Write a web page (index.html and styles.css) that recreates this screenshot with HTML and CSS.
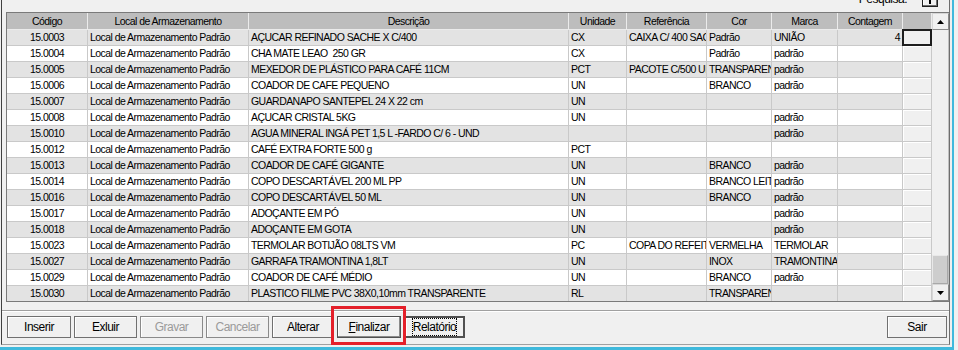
FILE: index.html
```html
<!DOCTYPE html>
<html lang="pt-BR">
<head>
<meta charset="utf-8">
<title>Contagem de estoque</title>
<link rel="stylesheet" href="styles.css">
</head>
<body>
<div class="frame">
  <div class="panel">
    <div class="topbar">
      <span class="search-label">Pesquisa:</span>
      <span class="plus-btn"><svg width="10" height="10" viewBox="0 0 10 10"><rect x="4" y="0" width="2" height="10" fill="#000"/><rect x="0" y="4" width="10" height="2" fill="#000"/></svg></span>
    </div>
    <div class="grid">
      <div class="table">
        <div class="row head">
          <div class="c">Código</div><div class="c">Local de Armazenamento</div><div class="c">Descrição</div><div class="c">Unidade</div><div class="c">Referência</div><div class="c">Cor</div><div class="c">Marca</div><div class="c">Contagem</div><div class="c"></div>
        </div>
        <div class="row odd"><div class="c cod">15.0003</div><div class="c">Local de Armazenamento Padrão</div><div class="c">AÇUCAR REFINADO SACHE X C/400</div><div class="c">CX</div><div class="c">CAIXA C/ 400 SAC</div><div class="c">Padrão</div><div class="c">UNIÃO</div><div class="c num">4</div><div class="c b focus"></div></div>
        <div class="row even"><div class="c cod">15.0004</div><div class="c">Local de Armazenamento Padrão</div><div class="c">CHA MATE LEAO&nbsp; 250 GR</div><div class="c">CX</div><div class="c"></div><div class="c">Padrão</div><div class="c">padrão</div><div class="c num"></div><div class="c b"></div></div>
        <div class="row odd"><div class="c cod">15.0005</div><div class="c">Local de Armazenamento Padrão</div><div class="c">MEXEDOR DE PLÁSTICO PARA CAFÉ 11CM</div><div class="c">PCT</div><div class="c">PACOTE C/500 UN</div><div class="c">TRANSPAREN</div><div class="c">padrão</div><div class="c num"></div><div class="c b"></div></div>
        <div class="row even"><div class="c cod">15.0006</div><div class="c">Local de Armazenamento Padrão</div><div class="c">COADOR DE CAFE PEQUENO</div><div class="c">UN</div><div class="c"></div><div class="c">BRANCO</div><div class="c">padrão</div><div class="c num"></div><div class="c b"></div></div>
        <div class="row odd"><div class="c cod">15.0007</div><div class="c">Local de Armazenamento Padrão</div><div class="c">GUARDANAPO SANTEPEL 24 X 22 cm</div><div class="c">UN</div><div class="c"></div><div class="c"></div><div class="c"></div><div class="c num"></div><div class="c b"></div></div>
        <div class="row even"><div class="c cod">15.0008</div><div class="c">Local de Armazenamento Padrão</div><div class="c">AÇUCAR CRISTAL 5KG</div><div class="c">UN</div><div class="c"></div><div class="c"></div><div class="c">padrão</div><div class="c num"></div><div class="c b"></div></div>
        <div class="row odd"><div class="c cod">15.0010</div><div class="c">Local de Armazenamento Padrão</div><div class="c">AGUA MINERAL INGÁ PET 1,5 L -FARDO C/ 6 - UND</div><div class="c"></div><div class="c"></div><div class="c"></div><div class="c">padrão</div><div class="c num"></div><div class="c b"></div></div>
        <div class="row even"><div class="c cod">15.0012</div><div class="c">Local de Armazenamento Padrão</div><div class="c">CAFÉ EXTRA FORTE 500 g</div><div class="c">PCT</div><div class="c"></div><div class="c"></div><div class="c"></div><div class="c num"></div><div class="c b"></div></div>
        <div class="row odd"><div class="c cod">15.0013</div><div class="c">Local de Armazenamento Padrão</div><div class="c">COADOR DE CAFÉ GIGANTE</div><div class="c">UN</div><div class="c"></div><div class="c">BRANCO</div><div class="c">padrão</div><div class="c num"></div><div class="c b"></div></div>
        <div class="row even"><div class="c cod">15.0014</div><div class="c">Local de Armazenamento Padrão</div><div class="c">COPO DESCARTÁVEL 200 ML PP</div><div class="c">UN</div><div class="c"></div><div class="c">BRANCO LEIT</div><div class="c">padrão</div><div class="c num"></div><div class="c b"></div></div>
        <div class="row odd"><div class="c cod">15.0016</div><div class="c">Local de Armazenamento Padrão</div><div class="c">COPO DESCARTÁVEL 50 ML</div><div class="c">UN</div><div class="c"></div><div class="c">BRANCO</div><div class="c">padrão</div><div class="c num"></div><div class="c b"></div></div>
        <div class="row even"><div class="c cod">15.0017</div><div class="c">Local de Armazenamento Padrão</div><div class="c">ADOÇANTE EM PÓ</div><div class="c">UN</div><div class="c"></div><div class="c"></div><div class="c">padrão</div><div class="c num"></div><div class="c b"></div></div>
        <div class="row odd"><div class="c cod">15.0018</div><div class="c">Local de Armazenamento Padrão</div><div class="c">ADOÇANTE EM GOTA</div><div class="c">UN</div><div class="c"></div><div class="c"></div><div class="c">padrão</div><div class="c num"></div><div class="c b"></div></div>
        <div class="row even"><div class="c cod">15.0023</div><div class="c">Local de Armazenamento Padrão</div><div class="c">TERMOLAR BOTIJÃO 08LTS VM</div><div class="c">PC</div><div class="c">COPA DO REFEIT</div><div class="c">VERMELHA</div><div class="c">TERMOLAR</div><div class="c num"></div><div class="c b"></div></div>
        <div class="row odd"><div class="c cod">15.0027</div><div class="c">Local de Armazenamento Padrão</div><div class="c">GARRAFA TRAMONTINA 1,8LT</div><div class="c">UN</div><div class="c"></div><div class="c">INOX</div><div class="c">TRAMONTINA</div><div class="c num"></div><div class="c b"></div></div>
        <div class="row even"><div class="c cod">15.0029</div><div class="c">Local de Armazenamento Padrão</div><div class="c">COADOR DE CAFÉ MÉDIO</div><div class="c">UN</div><div class="c"></div><div class="c">BRANCO</div><div class="c">padrão</div><div class="c num"></div><div class="c b"></div></div>
        <div class="row odd"><div class="c cod">15.0030</div><div class="c">Local de Armazenamento Padrão</div><div class="c">PLASTICO FILME PVC 38X0,10mm TRANSPARENTE</div><div class="c">RL</div><div class="c"></div><div class="c">TRANSPAREN</div><div class="c"></div><div class="c num"></div><div class="c b"></div></div>
      </div>
      <div class="vscroll">
        <div class="arrow"><svg width="7" height="4" viewBox="0 0 7 4"><polygon points="0,4 7,4 3.5,0" fill="#000"/></svg></div>
        <div class="track"><div class="thumb"></div></div>
        <div class="arrow"><svg width="7" height="4" viewBox="0 0 7 4"><polygon points="0,0 7,0 3.5,4" fill="#000"/></svg></div>
      </div>
    </div>
    <div class="sep"></div>
    <div class="buttons">
      <button class="btn w-ins">Inserir</button>
      <button class="btn w-exc">Exluir</button>
      <button class="btn w-gra" disabled>Gravar</button>
      <button class="btn w-can" disabled>Cancelar</button>
      <button class="btn w-alt">Alterar</button>
      <button class="btn w-fin default"><u>F</u>inalizar</button>
      <button class="btn w-rel focused"><span class="focus-ring">Relatório</span></button>
      <button class="btn w-sair">Sair</button>
    </div>
  </div>
  <div class="highlight"></div>
</div>
</body>
</html>
```
FILE: styles.css
```css
* { box-sizing: border-box; }

body {
  margin: 0;
  background: #f0f0f0;
  font-family: "Liberation Sans", Arial, sans-serif;
  color: #000;
}

.frame {
  position: relative;
  width: 954px;
  height: 350px;
  border-right: 2px solid #3fb9dc;
  border-bottom: 3px solid #3fb9dc;
  padding: 0 2px 2px 1px;
}

.panel {
  height: 345px;
  border-left: 1px solid #404040;
  border-right: 1px solid #6e6e6e;
  border-bottom: 1px solid #a0a0a0;
  display: flex;
  flex-direction: column;
}

.topbar {
  height: 12px;
  display: flex;
  justify-content: flex-end;
  align-items: flex-start;
  padding-right: 11px;
}

.search-label {
  font-size: 12px;
  line-height: 13px;
  letter-spacing: -0.5px;
  margin-top: -7px;
  margin-right: 15px;
}

.plus-btn {
  width: 16px;
  height: 16px;
  margin-top: -9px;
  border: 1px solid #202020;
  box-shadow: inset -1px -1px #6e6e6e, inset 1px 1px #fff;
  display: flex;
  align-items: center;
  justify-content: center;
}

.grid {
  margin-left: 4px;
  height: 290px;
  border-top: 1px solid #7a7a7a;
  border-left: 1px solid #7a7a7a;
  border-bottom: 1px solid #7a7a7a;
  display: flex;
  overflow: hidden;
}

.table { width: 925px; }

.row {
  display: grid;
  grid-template-columns: 81px 161px 320px 58px 80px 65px 66px 65px 29px;
  height: 16px;
}

.c {
  border-right: 1px solid #c9c9c9;
  border-bottom: 1px solid #c9c9c9;
  font-size: 10.5px;
  letter-spacing: -0.55px;
  line-height: 15px;
  padding: 0 2px;
  white-space: nowrap;
  overflow: hidden;
}

.head { height: 17px; background: #bdbdbd; }
.head .c {
  text-align: center;
  line-height: 16px;
  border-right-color: #ebebeb;
  border-bottom-color: #ebebeb;
}

.odd { background: #e3e3e3; }
.even { background: #fff; }

.cod { text-align: center; }
.num { text-align: right; }

.b {
  background: #f0f0f0;
  box-shadow: inset 1px 1px #fff;
}

.focus { position: relative; overflow: visible; }
.focus::after {
  content: "";
  position: absolute;
  left: -1px;
  top: -1px;
  right: -1px;
  bottom: -1px;
  border: 2px solid #1e1e1e;
}

.vscroll {
  width: 17px;
  display: flex;
  flex-direction: column;
  background: #f0f0f0;
}

.arrow {
  height: 17px;
  flex: none;
  display: flex;
  align-items: center;
  justify-content: center;
  background: #f0f0f0;
  border: 1px solid #d6d6d6;
  border-right-color: #8a8a8a;
  border-bottom-color: #8a8a8a;
}

.track {
  flex: 1;
  display: flex;
  flex-direction: column;
  justify-content: flex-end;
  background: #f0f0f0;
  border-right: 1px solid #c0c0c0;
}

.thumb {
  height: 29px;
  background: #cdcdcd;
  border: 1px solid #a8a8a8;
  border-top-color: #e8e8e8;
  border-left-color: #e8e8e8;
}

.sep {
  margin-top: 8px;
  border-top: 1px solid #a0a0a0;
  border-bottom: 1px solid #fff;
}

.buttons {
  display: flex;
  gap: 3px;
  padding: 4px 2px 0 5px;
}

.btn {
  height: 22px;
  padding: 0;
  font-family: inherit;
  font-size: 12px;
  letter-spacing: -0.5px;
  color: #000;
  background: #f0f0f0;
  border: 1px solid #707070;
  box-shadow: inset 1px 1px #fff;
}

.btn:disabled { color: #9a9a9a; border-color: #8a8a8a; }

.w-ins { width: 64px; }
.w-exc { width: 63px; }
.w-gra { width: 63px; }
.w-can { width: 63px; }
.w-alt { width: 62px; }
.w-fin { width: 64px; }
.w-rel { width: 61px; }
.w-sair { width: 60px; margin-left: auto; }

.default {
  border-color: #505050;
  box-shadow: inset -1px -1px #8a8a8a, inset 1px 1px #fff;
}

.focused {
  border: 2px solid #505050;
}

.focus-ring {
  outline: 1px dotted #000;
  outline-offset: 0;
  padding: 1px 0;
}

.highlight {
  position: absolute;
  left: 331px;
  top: 306px;
  width: 75px;
  height: 39px;
  border: 3px solid #e4202a;
}
```
